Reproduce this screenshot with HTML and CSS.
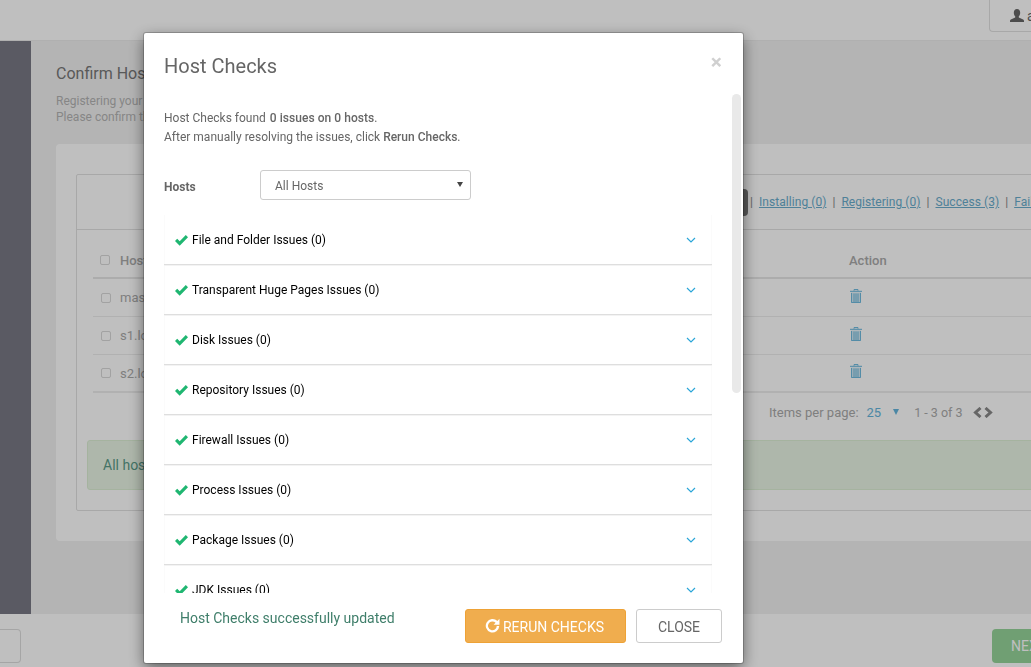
FILE: index.html
```html
<!DOCTYPE html>
<html lang="en">
<head>
<meta charset="utf-8">
<title>Host Checks</title>
<link rel="stylesheet" href="styles.css">
</head>
<body>
<div class="page">
  <header class="topbar">
    <div class="user-btn">
      <svg class="user-icon" viewBox="0 0 14 14"><path d="M7 0c2 0 3.200 1.500 3.200 3.700 0 1.500-.6 2.900-1.400 3.600v1.200l4.300 2.100c.6.300.9.800.9 1.400v1H.0v-1c0-.6.300-1.100.9-1.400l4.300-2.100V7.300C4.400 6.600 3.800 5.200 3.800 3.700 3.800 1.500 5 0 7 0z"/></svg>
      <span>admin</span>
    </div>
  </header>
  <div class="main">
    <aside class="sidebar"></aside>
    <section class="content">
      <h2 class="page-title">Confirm Hosts</h2>
      <p class="page-desc">Registering your hosts.<br>Please confirm the host list and remove any hosts that you do not want to include in the cluster.</p>
      <div class="card">
        <div class="panel">
          <div class="filter-row">
            <span class="chip">0</span>
            <span class="sep">|</span><a>Installing (0)</a>
            <span class="sep">|</span><a>Registering (0)</a>
            <span class="sep">|</span><a>Success (3)</a>
            <span class="sep">|</span><a>Fail (0)</a>
          </div>
          <div class="table">
            <div class="tr th"><span class="cb"></span><span class="host">Host</span><span class="action">Action</span></div>
            <div class="tr"><span class="cb"></span><span class="host">master.local</span><span class="action"><svg class="trash" viewBox="0 0 12 14"><use href="#trash"/></svg></span></div>
            <div class="tr"><span class="cb"></span><span class="host">s1.local</span><span class="action"><svg class="trash" viewBox="0 0 12 14"><use href="#trash"/></svg></span></div>
            <div class="tr"><span class="cb"></span><span class="host">s2.local</span><span class="action"><svg class="trash" viewBox="0 0 12 14"><use href="#trash"/></svg></span></div>
          </div>
          <div class="pager">
            <span class="pp">Items per page:</span><span class="pp-val">25</span><span class="pp-caret"></span>
            <span class="pp-range">1 - 3 of 3</span>
            <svg class="pp-arrows" viewBox="0 0 20 11"><path d="M7.500 1 2.500 5.500 7.500 10M12.500 1l5 4.500-5 4.500"/></svg>
          </div>
          <div class="alert">All hosts registered successfully.</div>
        </div>
      </div>
    </section>
  </div>
  <footer class="footbar">
    <button class="back-btn"></button>
    <button class="next-btn">NEXT</button>
  </footer>
</div>

<svg class="defs" width="0" height="0">
  <symbol id="trash" viewBox="0 0 12 14">
    <path d="M4 1.700V.6h4v1.100M0 2.300h12" fill="none" stroke="currentColor" stroke-width="1"/>
    <path d="M1 3.500h10V14H1z" fill="currentColor" opacity=".3"/>
    <path d="M1.500 4v9.500h9V4M4 4.500v8.500M6 4.500v8.500M8 4.500v8.500" fill="none" stroke="currentColor" stroke-width=".9"/>
  </symbol>
  <symbol id="check" viewBox="0 0 13 11">
    <path d="M0 6 2.200 3.800l2.500 2.500L10.800 0 13 2.200 4.700 10.800z" fill="currentColor"/>
  </symbol>
  <symbol id="chev" viewBox="0 0 10 6">
    <path d="M1 1l4 4 4-4" fill="none" stroke="currentColor" stroke-width="1.200"/>
  </symbol>
</svg>

<div class="backdrop"></div>

<div class="modal">
  <div class="modal-head">
    <h3>Host Checks</h3>
    <span class="close-x">×</span>
  </div>
  <div class="modal-body">
    <p class="summary">Host Checks found <b class="count">0 issues on 0 hosts</b>.<br>After manually resolving the issues, click <b>Rerun Checks</b>.</p>
    <div class="hosts-row">
      <label>Hosts</label>
      <div class="select">All Hosts<span class="select-caret"></span></div>
    </div>
    <div class="rows">
      <div class="row"><svg class="check"><use href="#check"/></svg><span>File and Folder Issues (0)</span><svg class="chev"><use href="#chev"/></svg></div>
      <div class="row"><svg class="check"><use href="#check"/></svg><span>Transparent Huge Pages Issues (0)</span><svg class="chev"><use href="#chev"/></svg></div>
      <div class="row"><svg class="check"><use href="#check"/></svg><span>Disk Issues (0)</span><svg class="chev"><use href="#chev"/></svg></div>
      <div class="row"><svg class="check"><use href="#check"/></svg><span>Repository Issues (0)</span><svg class="chev"><use href="#chev"/></svg></div>
      <div class="row"><svg class="check"><use href="#check"/></svg><span>Firewall Issues (0)</span><svg class="chev"><use href="#chev"/></svg></div>
      <div class="row"><svg class="check"><use href="#check"/></svg><span>Process Issues (0)</span><svg class="chev"><use href="#chev"/></svg></div>
      <div class="row"><svg class="check"><use href="#check"/></svg><span>Package Issues (0)</span><svg class="chev"><use href="#chev"/></svg></div>
      <div class="row"><svg class="check"><use href="#check"/></svg><span>JDK Issues (0)</span><svg class="chev"><use href="#chev"/></svg></div>
    </div>
    <div class="thumb"></div>
  </div>
  <div class="modal-foot">
    <span class="updated">Host Checks successfully updated</span>
    <button class="rerun"><svg class="refresh" viewBox="0 0 14 14"><path d="M11.600 2.900A6.300 6.300 0 1 0 13.300 7.500h-2.300a4.100 4.100 0 1 1-1.100-3L8 6.300h5.500V.8z"/></svg>RERUN CHECKS</button>
    <button class="close-btn">CLOSE</button>
  </div>
</div>
</body>
</html>
```
FILE: styles.css
```css
* { box-sizing: border-box; }
html, body { margin: 0; height: 100%; overflow: hidden; }
body { font-family: Roboto, "Liberation Sans", sans-serif; font-size: 12px; color: #666; background: #fff; }
.defs { position: absolute; }

.page { height: 667px; display: flex; flex-direction: column; }
.topbar { height: 41px; background: #fff; border-bottom: 1px solid #ebebeb; display: flex; justify-content: flex-end; flex: none; }
.user-btn { width: 42px; height: 32px; border: 1px solid #e0e0e0; border-top: 0; border-right: 0; border-radius: 0 0 0 4px; display: flex; align-items: center; gap: 3px; padding-left: 20px; overflow: hidden; white-space: nowrap; font-size: 14px; color: #666; }
.user-icon { width: 14px; height: 14px; fill: #666; flex: none; }

.main { flex: 1; display: flex; min-height: 0; }
.sidebar { width: 31px; background: #787984; flex: none; }
.content { flex: 1; background: #f1f1f1; padding: 23px 0 0 25px; min-width: 0; overflow: hidden; }
.page-title { margin: 0; font-size: 16px; font-weight: 400; line-height: 20px; color: #777; }
.page-desc { margin: 9px 0 0; font-size: 12px; line-height: 16px; color: #b3b3b3; white-space: nowrap; }
.card { margin-top: 19px; width: 1100px; height: 397px; background: #fff; border-radius: 4px; padding: 30px 20px 0; }
.panel { height: 337px; border: 1px solid #e0e0e0; border-radius: 2px; }
.filter-row { height: 55px; border-bottom: 1px solid #e0e0e0; display: flex; align-items: center; padding-left: 658px; gap: 6px; white-space: nowrap; color: #888; }
.filter-row a { color: #6aaccc; text-decoration: underline; letter-spacing: .06px; }
.sep { color: #888; }
.chip { width: 17px; height: 27px; background: #777; border-radius: 4px; color: #fff; margin-left: -4px; margin-right: -4px; text-align: center; line-height: 27px; overflow: hidden; text-indent: -5px; }
.table { padding: 0 16px 0; }
.tr { height: 38px; border-bottom: 1px solid #ececec; display: flex; align-items: center; padding-left: 8px; }
.tr:last-child { border-bottom-width: 2px; }
.tr.th { height: 49px; border-bottom: 2px solid #e6e6e6; padding-left: 7px; padding-top: 13px; font-weight: 500; color: #aaa; }
.cb { width: 10px; height: 10px; border: 1px solid #d8d8d8; border-radius: 2px; flex: none; margin-right: 9px; }
.th .cb { margin-right: 10px; }
.tr .host { font-size: 13px; color: #aaa; width: 729px; }
.action { font-size: 13px; }
.trash { width: 12px; height: 14px; color: #64b5dc; display: block; margin: -4px 0 0 1px; }
.pager { height: 47px; padding: 0 0 9px 692px; display: flex; align-items: center; white-space: nowrap; color: #aaa; font-size: 13px; }
.pp-val { color: #64b5dc; margin-left: 8px; }
.pp-caret { width: 0; height: 0; margin-left: 12px; border: 3px solid transparent; border-top: 6px solid #64b5dc; border-bottom: 0; }
.pp-range { margin-left: 15px; font-size: 12.500px; }
.pp-arrows { width: 20px; height: 11px; margin-left: 10px; fill: none; stroke: #888; stroke-width: 3; }
.alert { margin: 0 10px; height: 50px; background: #e9f5e5; border: 1px solid #dcefd5; border-radius: 3px; padding-left: 15px; line-height: 48px; font-size: 14px; color: #5a9a88; }

.footbar { height: 53px; background: #fff; flex: none; display: flex; justify-content: space-between; align-items: flex-start; padding-top: 15px; }
.back-btn { width: 21px; height: 34px; background: #fff; border: 1px solid #ddd; border-left: 0; border-radius: 0 4px 4px 0; }
.next-btn { width: 70px; height: 34px; background: #96d49a; border: 0; border-radius: 4px 0 0 4px; color: #fff; font: 14px Roboto, sans-serif; text-align: left; padding-left: 19px; margin-right: -31px; }

.backdrop { position: fixed; inset: 0; background: rgba(0, 0, 0, .25); }

.modal { position: fixed; left: 144px; top: 33px; width: 599px; height: 630px; background: #fff; border-radius: 2px; box-shadow: 0 0 0 1px rgba(0,0,0,.2), 0 5px 15px rgba(0,0,0,.5); display: flex; flex-direction: column; }
.modal-head { height: 61px; padding: 20px 20px 0; flex: none; position: relative; }
.modal-head h3 { margin: 0; font-size: 20px; font-weight: 400; line-height: 26px; color: #666; }
.close-x { position: absolute; right: 21px; top: 16px; font-size: 21px; line-height: 26px; font-weight: 700; color: #d0d0d0; }
.modal-body { flex: 1; min-height: 0; overflow: hidden; position: relative; padding: 15px 31px 0 20px; }
.summary { margin: 0; font-size: 12px; line-height: 19px; color: #666; }
.summary b { font-weight: 500; }
.summary .count { margin-left: 1px; letter-spacing: .05px; }
.hosts-row { display: flex; align-items: center; margin-top: 23px; height: 30px; }
.hosts-row label { width: 96px; font-weight: 700; font-size: 12px; color: #666; padding-top: 4px; }
.select { width: 211px; height: 30px; border: 1px solid #ccc; border-radius: 3px; padding-left: 14px; line-height: 30px; font-size: 12px; color: #666; position: relative; }
.select-caret { position: absolute; right: 7px; top: 11px; border: 3px solid transparent; border-top: 5px solid #444; border-bottom: 0; }
.rows { margin-top: 15px; padding-top: 1px; box-shadow: inset 1px 0 #fbfbfb, inset -1px 0 #fbfbfb; }
.row { height: 50px; border-bottom: 1px solid #f3f3f3; box-shadow: inset 0 -1px #dedede; display: flex; align-items: center; padding: 0 0 1px 11px; color: #000; font-size: 12px; }
.check { width: 13px; height: 11px; color: #1fb671; flex: none; margin-right: 4px; }
.row span { flex: 1; }
.chev { width: 10px; height: 6px; color: #2ba6d8; flex: none; margin-right: 16px; }
.thumb { position: absolute; left: 588px; top: 0; width: 9px; height: 299px; background: #e9e9e9; border-radius: 5px; }

.modal-foot { height: 70px; flex: none; padding: 16px 21px 0 36px; display: flex; align-items: flex-start; position: relative; }
.updated { flex: 1; font-size: 14px; line-height: 18px; color: #3f7e6a; }
.rerun { width: 161px; height: 34px; background: #f0ad4e; border: 1px solid #eea236; border-radius: 3px; color: #fff; font: 14px Roboto, sans-serif; display: flex; align-items: center; justify-content: center; gap: 3px; padding: 1px 2px 0 0; }
.refresh { width: 15px; height: 15px; fill: #fff; margin-top: -2px; }
.close-btn { width: 86px; height: 34px; margin-left: 10px; background: #fff; border: 1px solid #ccc; border-radius: 3px; color: #666; font: 14px Roboto, sans-serif; padding: 1px 0 0; }
```
